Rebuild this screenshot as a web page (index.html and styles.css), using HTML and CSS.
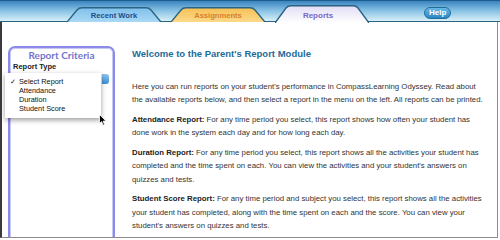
FILE: index.html
```html
<!doctype html>
<html lang="en">
    <head>
        <meta charset="utf-8">
        <title>Reports</title>
        <link rel="stylesheet" href="styles.css">
    </head>
    <body>
        <header class="topbar">
            <nav class="tabs">
                <a href="#" class="tab tab-recent">
                    <svg class="tab-shape" viewBox="0 0 94 15" preserveAspectRatio="none">
                        <defs>
                            <linearGradient id="gRecent" x1="0" y1="0" x2="0" y2="1">
                                <stop offset="0" stop-color="#7fc0ec"/>
                                <stop offset="1" stop-color="#a9d9f5"/>
                            </linearGradient>
                        </defs>
                        <path d="M0 15 L10 3 Q12 0.8 15 0.8 L79 0.8 Q82 0.8 84 3 L94 15" fill="url(#gRecent)" stroke="#2b6382" stroke-width="1.4"/>
                    </svg>
                    <span>Recent Work</span>
                </a>
                <a href="#" class="tab tab-assign">
                    <svg class="tab-shape" viewBox="0 0 94 15" preserveAspectRatio="none">
                        <defs>
                            <linearGradient id="gAssign" x1="0" y1="0" x2="0" y2="1">
                                <stop offset="0" stop-color="#f6c156"/>
                                <stop offset="1" stop-color="#fcd98a"/>
                            </linearGradient>
                        </defs>
                        <path d="M0 15 L10 3 Q12 0.8 15 0.8 L79 0.8 Q82 0.8 84 3 L94 15" fill="url(#gAssign)" stroke="#2b6382" stroke-width="1.4"/>
                    </svg>
                    <span>Assignments</span>
                </a>
                <a href="#" class="tab tab-reports">
                    <svg class="tab-shape" viewBox="0 0 94 18" preserveAspectRatio="none">
                        <defs>
                            <linearGradient id="gReports" x1="0" y1="0" x2="0" y2="1">
                                <stop offset="0" stop-color="#e2ddf6"/>
                                <stop offset="1" stop-color="#ffffff"/>
                            </linearGradient>
                        </defs>
                        <path d="M0 18 L11 3 Q13 0.8 16 0.8 L78 0.8 Q81 0.8 83 3 L94 18 Z" fill="url(#gReports)"/>
                        <path d="M0 18 L11 3 Q13 0.8 16 0.8 L78 0.8 Q81 0.8 83 3 L94 18" fill="none" stroke="#2b6382" stroke-width="1.4"/>
                    </svg>
                    <span>Reports</span>
                </a>
            </nav>
            <a href="#" class="help">Help</a>
        </header>

        <main class="frame">
            <aside class="criteria">
                <div class="criteria-box">
                    <h2>Report Criteria</h2>
                    <label class="field-label">Report Type</label>
                    <div class="select"><span class="select-arrows"></span></div>
                </div>
                <ul class="popup">
                    <li class="checked">Select Report</li>
                    <li>Attendance</li>
                    <li>Duration</li>
                    <li>Student Score</li>
                </ul>
                <svg class="cursor" viewBox="0 0 8 12" width="8" height="12">
                    <path d="M0.5 0.5 L0.5 9.5 L2.6 7.6 L4.1 11.2 L5.5 10.6 L4.1 7.1 L7 7.1 Z" fill="#000" stroke="#fff" stroke-width="0.8"/>
                </svg>
            </aside>

            <section class="intro">
                <h1>Welcome to the Parent's Report Module</h1>
                <p>Here you can run reports on your student's performance in CompassLearning Odyssey. Read about the available reports below, and then select a report in the menu on the left. All reports can be printed.</p>
                <p><b>Attendance Report:</b> For any time period you select, this report shows how often your student has done work in the system each day and for how long each day.</p>
                <p><b>Duration Report:</b> For any time period you select, this report shows all the activities your student has completed and the time spent on each. You can view the activities and your student's answers on quizzes and tests.</p>
                <p><b>Student Score Report:</b> For any time period and subject you select, this report shows all the activities your student has completed, along with the time spent on each and the score. You can view your student's answers on quizzes and tests.</p>
            </section>
        </main>
    </body>
</html>
```

FILE: styles.css
```css
html, body {
    margin: 0;
    background: #fff;
    font-family: "Liberation Sans", Arial, sans-serif;
}
.topbar {
    /* Blue strip with the tabs sitting on its bottom line. */
    display: flex;
    align-items: flex-end;
    height: 20px;
    border-top: 1px solid #1d5f8c;
    border-bottom: 1.5px solid #2b6382;
    background: linear-gradient(#3a84c0, #82bee2 45%, #d9f0f8);
}
.tabs {
    display: flex;
    align-items: flex-end;
    gap: 10px;
    padding-left: 67px;
}
.tab {
    position: relative;
    display: flex;
    align-items: center;
    justify-content: center;
    width: 94px;
    height: 15px;
    margin-bottom: -1px;
    text-decoration: none;
    font-size: 7.6px;
    font-weight: bold;
}
.tab span {
    position: relative;
    padding-top: 2px;
}
.tab-shape {
    /* The outline is drawn under the label. */
    position: absolute;
    left: 0;
    top: 0;
    width: 100%;
    height: 100%;
}
.tab-recent { color: #1f4f86; }
.tab-assign { color: #d4812c; }
.tab-reports {
    height: 18px;
    margin-bottom: -2px;
    color: #7868c4;
    font-size: 8px;
}
.tab-reports span {
    padding-right: 8px;
}
.help {
    margin: 0 0 2px 55px;
    padding: 0 4px;
    height: 10px;
    line-height: 10px;
    border: 1px solid #1f6f9c;
    border-radius: 6px;
    background: linear-gradient(#6ab8e6, #2a86c2);
    color: #fff;
    font-size: 8px;
    font-weight: bold;
    text-decoration: none;
}

.frame {
    display: flex;
    height: 215px;
    overflow: hidden;
    border-left: 2px solid #3a3a3a;
    border-right: 1px solid #8c8c8c;
    border-bottom: 1px solid #8c8c8c;
    margin-right: 2px;
}
.criteria {
    position: relative;
    width: 107px;
    padding: 24px 0 0 6px;
    flex-shrink: 0;
}
.criteria-box {
    height: 260px;
    border: 2px solid #8c8ce8;
    border-radius: 7px;
    box-shadow: inset 0 0 0 1px #c8c8f4;
}
.criteria h2 {
    margin: 1px 0 0;
    text-align: center;
    font-family: Lato, "Open Sans", sans-serif;
    font-size: 10px;
    font-weight: bold;
    color: #7474cc;
}
.field-label {
    display: block;
    margin: 1px 0 0 3px;
    font-size: 7.5px;
    font-weight: bold;
    color: #222;
}
.select {
    display: flex;
    justify-content: flex-end;
    margin: 3px 4px 0 6px;
    height: 10px;
    border-radius: 3px;
    background: #f2f2f2;
}
.select-arrows {
    width: 7px;
    border-radius: 0 3px 3px 0;
    background: linear-gradient(#8ec4ee, #3b8fd6);
}
.popup {
    /* Open menu of the Report Type select, drawn over the box. */
    position: absolute;
    left: 3px;
    top: 51px;
    width: 96px;
    margin: 0;
    padding: 4px 0 5px;
    list-style: none;
    background: #fff;
    box-shadow: 0 2px 5px rgba(0, 0, 0, 0.4);
    font-size: 7.3px;
    color: #111;
}
.popup li {
    height: 9px;
    line-height: 9px;
    padding-left: 14px;
    position: relative;
}
.popup .checked::before {
    content: "\2713";
    position: absolute;
    left: 5px;
}
.cursor {
    position: absolute;
    left: 97px;
    top: 92px;
}

.intro {
    padding: 25px 0 0 17px;
    width: 356px;
    color: #333;
    font-size: 7.8px;
    line-height: 13.5px;
}
.intro h1 {
    margin: 0 0 19px;
    font-size: 9.5px;
    color: #1d6b9b;
}
.intro p {
    margin: 0 0 6px;
}
.intro b {
    color: #222;
}
```
